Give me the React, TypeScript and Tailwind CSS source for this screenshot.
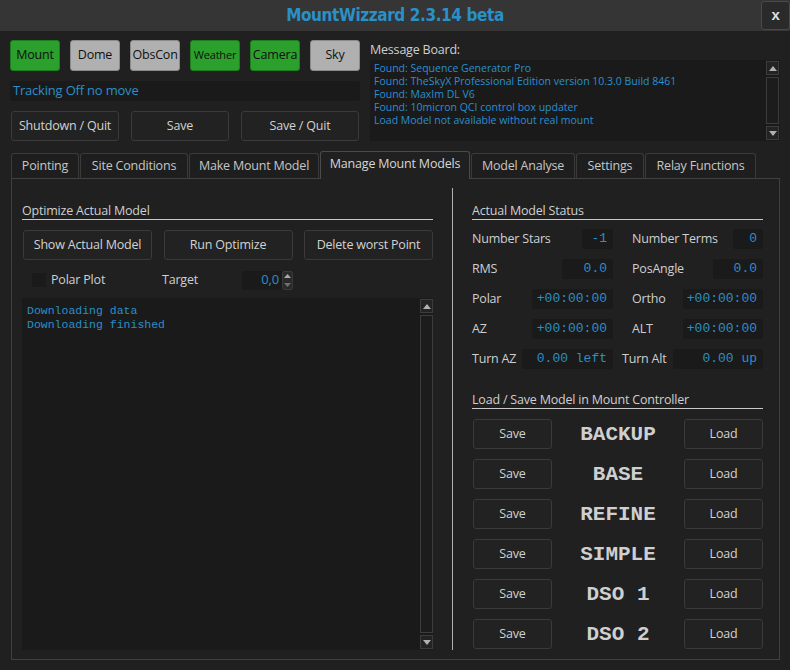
import React from 'react'

const btn =
    'flex items-center justify-center rounded-[3px] border border-[#3a3a3a] bg-[#222222] text-[12.5px] tracking-[-0.2px] text-[#d2d2d2]'
const field =
    'flex h-[20px] items-center justify-end rounded-[2px] bg-[#1a1a1a] pr-[6px] font-["Liberation_Mono",monospace] text-[13px] tracking-normal text-[#2a8fc8]'

function ScrollArrow({ up }: { up?: boolean }) {
    return (
        <div className="flex h-[14px] w-[13px] items-center justify-center border border-[#3c3c3c] bg-[#232323]">
            <svg width="8" height="5" viewBox="0 0 8 5">
                {up ? <path d="M0 5 L4 0 L8 5 Z" fill="#b0b0b0" /> : <path d="M0 0 L8 0 L4 5 Z" fill="#b0b0b0" />}
            </svg>
        </div>
    )
}

function Scrollbar() {
    return (
        <div className="flex h-full w-[13px] shrink-0 flex-col gap-[2px] py-[1px]">
            <ScrollArrow up />
            <div className="flex-1 border border-[#3c3c3c] bg-[#1c1c1c]" />
            <ScrollArrow />
        </div>
    )
}

function StatusRow({
    l1, v1, w1, l2, v2, w2, pad2 = 'pl-[10px]',
}: { l1: string; v1: string; w1: string; l2: string; v2: string; w2: string; pad2?: string }) {
    return (
        <div className="flex h-[20px] items-center">
            <div className="flex w-[141px] items-center justify-between">
                <span>{l1}</span>
                <div className={`${field} ${w1}`}>{v1}</div>
            </div>
            <div className={`ml-[9px] flex flex-1 items-center justify-between ${pad2}`}>
                <span>{l2}</span>
                <div className={`${field} ${w2}`}>{v2}</div>
            </div>
        </div>
    )
}

function ModelRow({ name }: { name: string }) {
    return (
        <div className="flex h-[30px] items-center justify-between pl-[1px]">
            <div className={`${btn} h-full w-[79px]`}>Save</div>
            <div className='flex-1 text-center font-["Liberation_Mono",monospace] text-[21px] font-bold leading-none tracking-normal text-[#cfcfcf]'>
                {name}
            </div>
            <div className={`${btn} h-full w-[79px]`}>Load</div>
        </div>
    )
}

const tabs = [
    { t: 'Pointing', w: 'w-[68px]' },
    { t: 'Site Conditions', w: 'w-[108px]' },
    { t: 'Make Mount Model', w: 'w-[130px]' },
    { t: 'Manage Mount Models', w: 'w-[150px]', active: true },
    { t: 'Model Analyse', w: 'w-[104px]' },
    { t: 'Settings', w: 'w-[68px]' },
    { t: 'Relay Functions', w: 'w-[111px]' },
]

const green = 'flex w-[50px] items-center justify-center rounded-[3px] border border-[#1f7d1f] bg-[#2ca02c] text-[#101010]'
const gray = 'flex w-[50px] items-center justify-center rounded-[3px] border border-[#8a8a8a] bg-[#b0b0b0] text-[#101010]'

export default function App() {
    return (
        <div className='flex h-[670px] w-[790px] flex-col overflow-hidden bg-[#202020] font-["Open_Sans",sans-serif] text-[12.5px] tracking-[-0.2px] text-[#cfcfcf]'>
            {/* title bar */}
            <div className="flex h-[31px] items-start bg-[#353535]">
                <div className="w-[29px]" />
                <div className='flex h-full flex-1 items-center justify-center font-["DejaVu_Sans_Condensed","DejaVu_Sans",sans-serif] text-[17px] font-bold tracking-[-0.4px] text-[#2a90c8] [font-stretch:condensed]'>
                    MountWizzard 2.3.14 beta
                </div>
                <div className="mt-[1px] flex h-[29px] w-[29px] items-center justify-center rounded-[3px] border border-[#4a4a4a] bg-[#2a2a2a] font-['Liberation_Sans',sans-serif] text-[15px] font-bold text-[#e0e0e0]">
                    x
                </div>
            </div>

            {/* top section */}
            <div className="flex gap-[10px] px-[10px] pt-[9px]">
                <div className="flex w-[350px] flex-col">
                    <div className="flex h-[31px] gap-[10px]">
                        <div className={green}>Mount</div>
                        <div className={gray}>Dome</div>
                        <div className={gray}>ObsCon</div>
                        <div className={`${green} text-[11px]`}>Weather</div>
                        <div className={green}>Camera</div>
                        <div className={gray}>Sky</div>
                    </div>
                    <div className="mt-[10px] flex h-[20px] items-center rounded-[2px] bg-[#1a1a1a] pl-[3px] text-[13px] text-[#2a90c8]">
                        Tracking Off no move
                    </div>
                    <div className="mt-[10px] flex h-[30px] gap-[12px] pl-[1px]">
                        <div className={`${btn} w-[108px]`}>Shutdown / Quit</div>
                        <div className={`${btn} w-[98px]`}>Save</div>
                        <div className={`${btn} w-[118px]`}>Save / Quit</div>
                    </div>
                </div>
                <div className="flex flex-1 flex-col">
                    <div className="h-[20px] pt-[2px] leading-[16px]">Message Board:</div>
                    <div className="flex h-[81px] bg-[#1a1a1a] pl-[4px] pr-[1px]">
                        <div className="flex-1 pt-[2px] text-[10.5px] leading-[13px] tracking-normal text-[#2a8fd0]">
                            <div>Found: Sequence Generator Pro</div>
                            <div>Found: TheSkyX Professional Edition version 10.3.0 Build 8461</div>
                            <div>Found: MaxIm DL V6</div>
                            <div>Found: 10micron QCI control box updater</div>
                            <div>Load Model not available without real mount</div>
                        </div>
                        <Scrollbar />
                    </div>
                </div>
            </div>

            {/* tabs */}
            <div className="mt-[10px] flex h-[27px] items-end gap-[1px] pl-[11px]">
                {tabs.map((tab) => (
                    <div
                        key={tab.t}
                        className={
                            tab.active
                                ? `${tab.w} relative z-10 -mb-[1px] flex h-[28px] items-center justify-center rounded-t-[3px] border border-b-0 border-[#4a4a4a] bg-[#202020] pb-[3px] text-[#d6d6d6]`
                                : `${tab.w} flex h-[25px] items-center justify-center rounded-t-[3px] border border-b-0 border-[#3a3a3a] bg-[#1e1e1e] text-[#c6c6c6]`
                        }
                    >
                        {tab.t}
                    </div>
                ))}
            </div>

            {/* tab pane */}
            <div className="ml-[11px] flex h-[482px] w-[769px] border border-[#404040] py-[9px] pl-[10px]">
                {/* left column */}
                <div className="flex w-[411px] flex-col pt-[15px]">
                    <div className="h-[17px] border-b border-[#c8c8c8] leading-[16px]">Optimize Actual Model</div>
                    <div className="mt-[10px] flex h-[30px] justify-between pl-[1px]">
                        <div className={`${btn} w-[129px]`}>Show Actual Model</div>
                        <div className={`${btn} w-[129px]`}>Run Optimize</div>
                        <div className={`${btn} w-[129px]`}>Delete worst Point</div>
                    </div>
                    <div className="mt-[9px] flex h-[22px] items-center">
                        <div className="flex w-[140px] items-center">
                            <div className="ml-[10px] h-[14px] w-[14px] bg-[#1a1a1a]" />
                            <span className="ml-[5px]">Polar Plot</span>
                        </div>
                        <span className="w-[80px]">Target</span>
                        <div className="flex h-[19px] w-[51px] items-center rounded-[2px] bg-[#1a1a1a]">
                            <span className="flex-1 pr-[3px] text-right text-[13px] text-[#2a8fc8]">0,0</span>
                            <div className="flex h-full w-[11px] flex-col gap-[1px] rounded-[2px] border border-[#3a3a3a] bg-[#2a2a2a]">
                                <div className="flex flex-1 items-center justify-center">
                                    <svg width="7" height="4" viewBox="0 0 7 4"><path d="M0 4 L3.5 0 L7 4 Z" fill="#a8a8a8" /></svg>
                                </div>
                                <div className="flex flex-1 items-center justify-center">
                                    <svg width="7" height="4" viewBox="0 0 7 4"><path d="M0 0 L7 0 L3.5 4 Z" fill="#707070" /></svg>
                                </div>
                            </div>
                        </div>
                    </div>
                    <div className="mt-[7px] flex flex-1 bg-[#1a1a1a] pl-[5px]">
                        <div className='flex-1 pt-[6px] font-["Liberation_Mono",monospace] text-[11.5px] leading-[14px] tracking-normal text-[#2a8fc8]'>
                            <div>Downloading data</div>
                            <div>Downloading finished</div>
                        </div>
                        <Scrollbar />
                    </div>
                </div>

                {/* divider */}
                <div className="ml-[19px] w-px bg-[#b0b0b0]" />

                {/* right column */}
                <div className="ml-[19px] flex w-[291px] flex-col pt-[15px]">
                    <div className="h-[17px] border-b border-[#c8c8c8] leading-[16px]">Actual Model Status</div>
                    <div className="mt-[9px] flex flex-col gap-[10px]">
                        <StatusRow l1="Number Stars" v1="-1" w1="w-[31px]" l2="Number Terms" v2="0" w2="w-[30px]" />
                        <StatusRow l1="RMS" v1="0.0" w1="w-[51px]" l2="PosAngle" v2="0.0" w2="w-[50px]" />
                        <StatusRow l1="Polar" v1="+00:00:00" w1="w-[81px]" l2="Ortho" v2="+00:00:00" w2="w-[80px]" />
                        <StatusRow l1="AZ" v1="+00:00:00" w1="w-[81px]" l2="ALT" v2="+00:00:00" w2="w-[80px]" />
                        <StatusRow l1="Turn AZ" v1="0.00 left" w1="w-[91px]" l2="Turn Alt" v2="0.00 up" w2="w-[90px]" pad2="pl-0" />
                    </div>
                    <div className="mt-[23px] h-[17px] border-b border-[#c8c8c8] leading-[16px]">Load / Save Model in Mount Controller</div>
                    <div className="mt-[10px] flex flex-col gap-[10px]">
                        <ModelRow name="BACKUP" />
                        <ModelRow name="BASE" />
                        <ModelRow name="REFINE" />
                        <ModelRow name="SIMPLE" />
                        <ModelRow name="DSO 1" />
                        <ModelRow name="DSO 2" />
                    </div>
                </div>
            </div>
        </div>
    )
}
